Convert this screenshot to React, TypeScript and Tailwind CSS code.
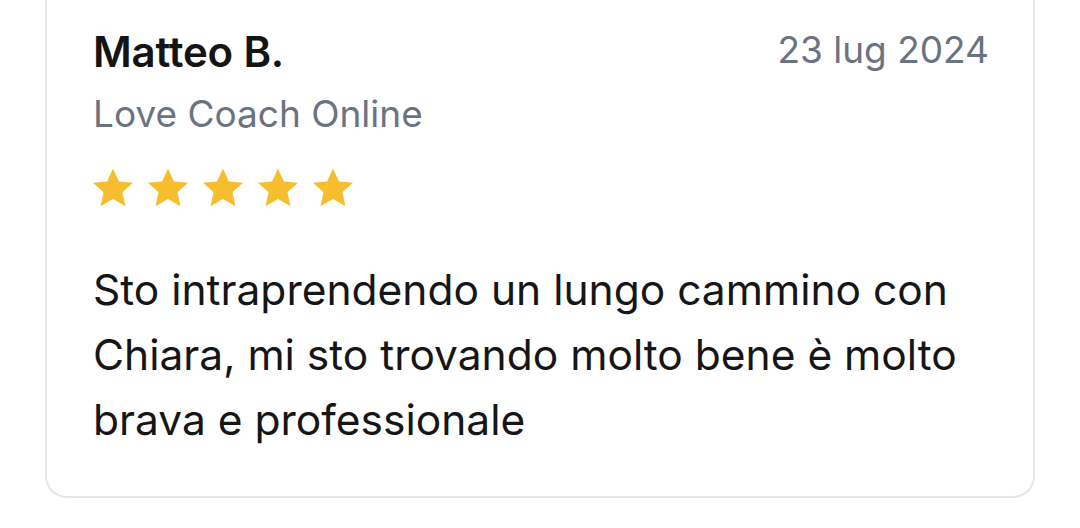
import React from "react";

function Star() {
  return (
    <svg viewBox="0 0 24 24" className="w-[48px] h-[48px]" fill="#f6be2e">
      <path d="M12 2.2l2.95 6.5 7.05.7-5.3 4.75 1.55 6.95L12 17.5l-6.25 3.6 1.55-6.95L2 9.4l7.05-.7z" />
    </svg>
  );
}

export default function App() {
  return (
    <div className="min-h-screen bg-white px-[45px] font-['Inter',sans-serif]">
      <div className="border-2 border-t-0 border-[#e6e6e8] rounded-b-[22px] pl-[46px] pr-[44px] pt-[28px] pb-[44px]">
        <div className="flex items-start justify-between">
          <div className="text-[42px] leading-[48px] font-semibold text-[#141414] tracking-[-0.2px]">
            Matteo B.
          </div>
          <div className="text-[37px] leading-[44px] text-[#6b7280]">23 lug 2024</div>
        </div>
        <div className="mt-[16px] text-[37px] leading-[44px] text-[#6b7280]">Love Coach Online</div>
        <div className="mt-[28px] flex gap-[7px] -ml-[4px]">
          <Star />
          <Star />
          <Star />
          <Star />
          <Star />
        </div>
        <p className="mt-[45px] text-[42.5px] leading-[65px] text-[#161616] max-w-[900px]">
          Sto intraprendendo un lungo cammino con Chiara, mi sto trovando molto bene è molto brava e professionale
        </p>
      </div>
    </div>
  );
}
